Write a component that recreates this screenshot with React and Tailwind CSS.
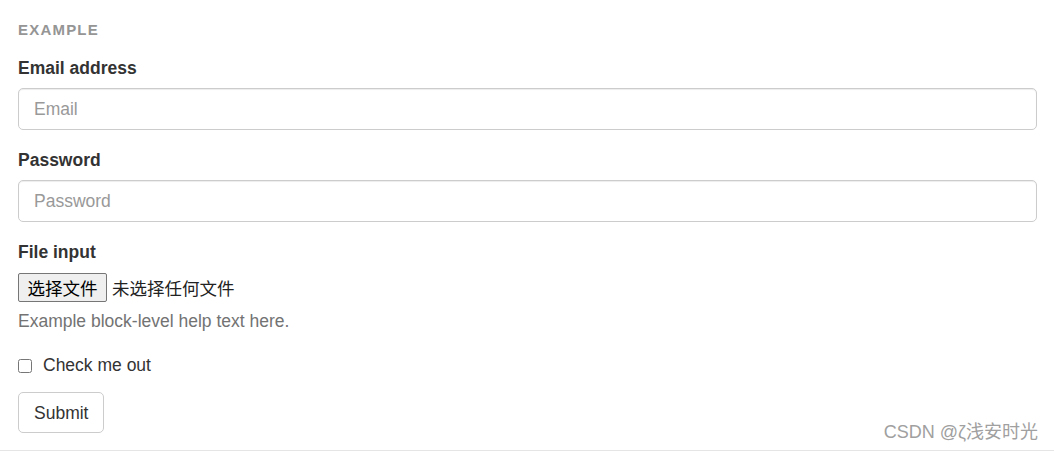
import React from 'react';

const SANS = "font-['Liberation_Sans',Arial,'Noto_Sans_CJK_SC',sans-serif]";

function Field({ label, type, placeholder }) {
  return (
    <div className="mb-[18px]">
      <label className="block h-[24px] mb-[8px] text-[17.5px] leading-[24px] font-bold text-[#333]">{label}</label>
      <input
        type={type}
        placeholder={placeholder}
        className="block w-full h-[42px] px-[15px] text-[17.5px] text-[#555] bg-white border border-[#ccc] rounded-[5px] shadow-[inset_0_1px_1px_rgba(0,0,0,0.075)] placeholder:text-[#999] outline-none"
      />
    </div>
  );
}

export default function App() {
  return (
    <div className={`relative w-full h-[452px] bg-white ${SANS}`}>
      <div className="h-[451px] pl-[18px] pr-[17px] pt-[20px] border-b border-[#e5e5e5]">
        {/* panel caption */}
        <div className="h-[20px] mb-[16px] text-[15px] leading-[20px] font-bold tracking-[1.2px] text-[#959595] uppercase">Example</div>

        <Field label="Email address" type="email" placeholder="Email" />
        <Field label="Password" type="password" placeholder="Password" />

        <div>
          <label className="block h-[24px] mb-[9px] text-[17.5px] leading-[24px] font-bold text-[#333]">File input</label>
          <div className="flex items-center h-[29px] font-['Noto_Sans_CJK_SC',sans-serif] text-[17.5px] text-[#222]">
            <button className="h-[29px] w-[89px] px-0 bg-[#efefef] border border-[#767676] rounded-[2px] leading-[27px] text-black">选择文件</button>
            <span className="ml-[5px] leading-[24px]">未选择任何文件</span>
          </div>
          <p className="mt-[7px] h-[24px] text-[17.5px] leading-[24px] text-[#737373]">Example block-level help text here.</p>
        </div>

        <label className="mt-[20px] flex items-center h-[24px] text-[17.5px] leading-[24px] text-[#333]">
          <input type="checkbox" className="w-[14px] h-[14px] m-0 mt-[2px] accent-[#333]" />
          <span className="ml-[11px]">Check me out</span>
        </label>

        <button className="mt-[15px] h-[41px] px-[15px] text-[17.5px] leading-[24px] text-[#333] bg-white border border-[#ccc] rounded-[5px]">Submit</button>
      </div>

      {/* watermark */}
      <div className="absolute right-[16px] top-[420px] text-[18px] leading-[24px] text-[#a0a0a0] font-['Liberation_Sans','Noto_Sans_CJK_SC',sans-serif]">CSDN @ζ浅安时光</div>
    </div>
  );
}
